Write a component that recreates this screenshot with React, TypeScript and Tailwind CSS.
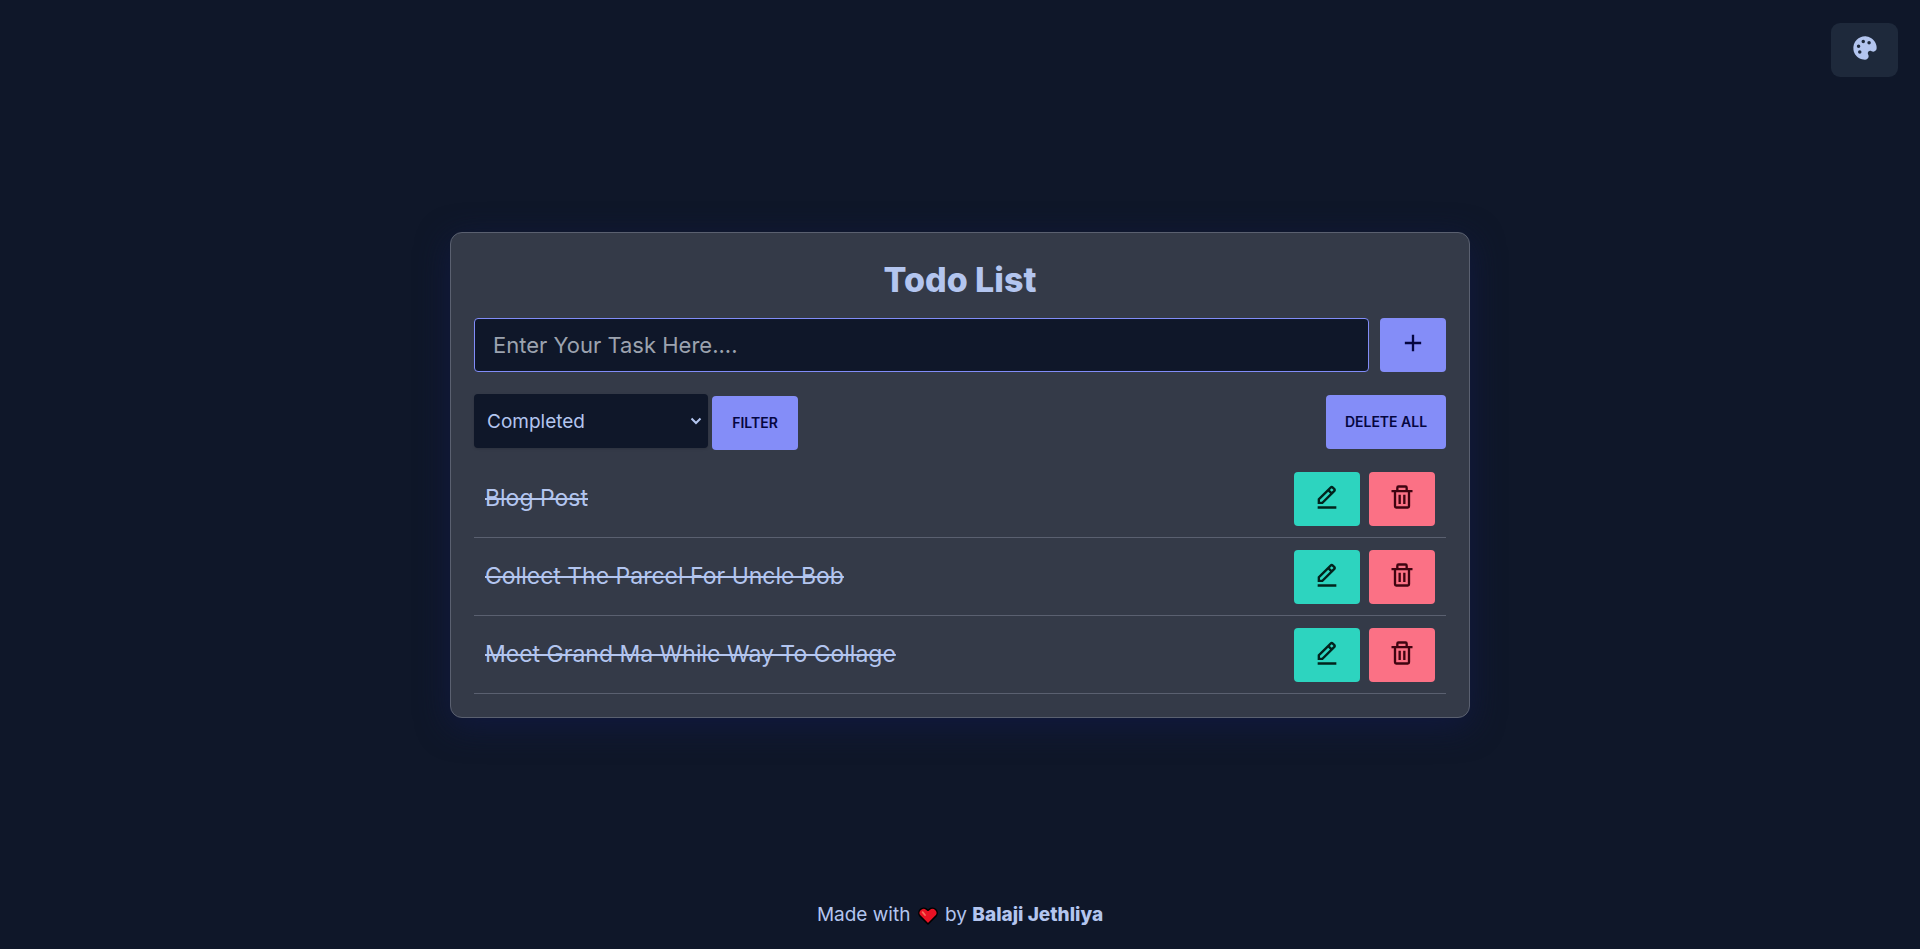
import { useState } from "react";
import { BiEditAlt, BiPlus, BiSolidPalette, BiTrash } from "react-icons/bi";

const initialTasks = [
  "Blog Post",
  "Collect The Parcel For Uncle Bob",
  "Meet Grand Ma While Way To Collage",
];

function Heart() {
  return (
    <svg viewBox="0 0 20 18" className="mx-0.5 inline-block h-[18px] w-5" role="img" aria-label="love">
      <path
        d="M10 17 1.9 8.9C.5 7.300.5 4.500 2.100 2.800 3.900.9 6.800.8 8.700 2.300L10 3.300l1.300-1C13.200.8 16.100.9 17.900 2.800c1.600 1.700 1.600 4.500.2 6.100Z"
        fill="#e81224"
        stroke="#000"
        strokeWidth="1.500"
        strokeLinejoin="round"
      />
      <path d="M4.600 5.200 7 8" stroke="#f4705a" strokeWidth="1.800" strokeLinecap="round" />
    </svg>
  );
}

export default function App() {
  const [task, setTask] = useState("");
  const [filter, setFilter] = useState("Completed");
  const [tasks, setTasks] = useState(initialTasks);

  return (
    <div className="grid min-h-screen grid-rows-[1fr_auto_1fr] bg-[#0f1729] font-['Inter',sans-serif] text-[#b3c5ef]">
      <header className="flex items-start justify-end px-[22px] py-[23px]">
        <button
          type="button"
          aria-label="Change theme"
          className="flex h-[54px] w-[67px] items-center justify-center rounded-[9px] bg-[#1e293b] pb-1"
        >
          <BiSolidPalette size={28} />
        </button>
      </header>

      <main className="mx-auto w-full max-w-[1020px] rounded-xl border border-[#5a6070] bg-[#343a48] px-[23px] pb-[23px] shadow-[0_8px_32px_#11193f]">
        <h1 className="pt-7 pb-5 text-center text-[34px] leading-[37px] font-extrabold">Todo List</h1>

        <form className="flex gap-[11px]" onSubmit={(e) => e.preventDefault()}>
          <input
            type="text"
            aria-label="Task"
            placeholder="Enter Your Task Here...."
            value={task}
            onChange={(e) => setTask(e.target.value)}
            className="h-[54px] min-w-0 grow rounded border border-[#818cf8] bg-[#0f1729] px-[18px] text-[22px] placeholder:text-[#9ca3af]"
          />
          <button
            type="submit"
            aria-label="Add task"
            className="flex h-[54px] w-[66px] shrink-0 items-center justify-center rounded bg-[#848df8] pb-1 text-[#050640]"
          >
            <BiPlus size={28} />
          </button>
        </form>

        <div className="mt-[22px] flex items-center justify-between">
          <div className="flex h-14 items-start gap-1">
            <div className="grid w-[234px] items-center">
              <select
                aria-label="Filter tasks"
                value={filter}
                onChange={(e) => setFilter(e.target.value)}
                className="col-start-1 row-start-1 h-[54px] w-full appearance-none rounded bg-[#0f1729] pt-1 pr-8 pl-[13px] text-[19px] shadow"
              >
                <option>All</option>
                <option>Completed</option>
                <option>Pending</option>
              </select>
              <svg
                viewBox="0 0 12 8"
                className="pointer-events-none col-start-1 row-start-1 mr-[6px] h-2 w-3 justify-self-end"
                fill="none"
                stroke="currentColor"
                strokeWidth="2"
                aria-hidden="true"
              >
                <path d="m1.500 1.500 4.500 4.500 4.500-4.500" />
              </svg>
            </div>
            <button
              type="button"
              className="h-[54px] w-[86px] self-end rounded bg-[#848df8] text-[14px] font-semibold text-[#050640]"
            >
              FILTER
            </button>
          </div>
          <button
            type="button"
            onClick={() => setTasks([])}
            className="h-[54px] w-[120px] rounded bg-[#848df8] text-[14px] font-semibold text-[#050640]"
          >
            DELETE ALL
          </button>
        </div>

        <ul className="mt-2.5">
          {tasks.map((name) => (
            <li key={name} className="flex items-center gap-[9px] border-b border-[#5a6070] px-[11px] pt-3 pb-[11px]">
              <span className="min-w-0 grow text-[23px] line-through decoration-2">{name}</span>
              <button
                type="button"
                aria-label={`Edit ${name}`}
                className="flex h-[54px] w-[66px] shrink-0 items-center justify-center rounded bg-[#2dd4bf] pb-1 text-[#02231d]"
              >
                <BiEditAlt size={28} />
              </button>
              <button
                type="button"
                aria-label={`Delete ${name}`}
                onClick={() => setTasks(tasks.filter((t) => t !== name))}
                className="flex h-[54px] w-[66px] shrink-0 items-center justify-center rounded bg-[#fb7185] pb-1 text-[#3f0410]"
              >
                <BiTrash size={28} />
              </button>
            </li>
          ))}
        </ul>
      </main>

      <footer className="flex items-end justify-center pb-5 text-[19px] leading-7">
        <p>
          Made with <Heart /> by <strong className="font-extrabold">Balaji Jethliya</strong>
        </p>
      </footer>
    </div>
  );
}
